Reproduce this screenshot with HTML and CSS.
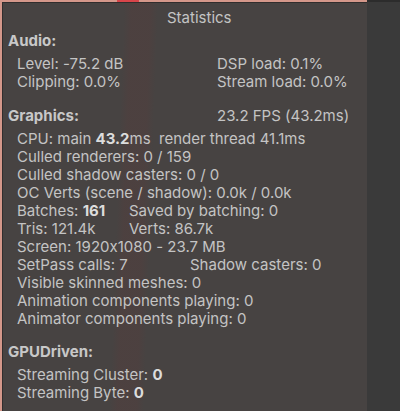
FILE: index.html
```html
<!DOCTYPE html>
<html lang="en">
<head>
<meta charset="utf-8">
<title>Statistics</title>
<link rel="stylesheet" href="styles.css">
</head>
<body>
<div class="app">
  <div class="viewport">
    <span class="scene-mark"></span>
    <div class="stats">
      <div class="title">Statistics</div>

      <section class="group">
        <div class="heading">Audio:</div>
        <div class="rows">
          <div class="row"><span class="cell w-200">Level: -75.2 dB</span><span>DSP load: 0.1%</span></div>
          <div class="row"><span class="cell w-200">Clipping: 0.0%</span><span>Stream load: 0.0%</span></div>
        </div>
      </section>

      <section class="group">
        <div class="heading-row"><span class="heading w-209">Graphics:</span><span class="fps">23.2 FPS (43.2ms)</span></div>
        <div class="rows">
          <div class="row">CPU: main&nbsp;<b>43.2</b>ms&nbsp; render thread 41.1ms</div>
          <div class="row">Culled renderers: 0 / 159</div>
          <div class="row">Culled shadow casters: 0 / 0</div>
          <div class="row">OC Verts (scene / shadow): 0.0k / 0.0k</div>
          <div class="row"><span class="cell w-112">Batches: <b>161</b></span><span>Saved by batching: 0</span></div>
          <div class="row"><span class="cell w-112">Tris: 121.4k</span><span>Verts: 86.7k</span></div>
          <div class="row">Screen: 1920x1080 - 23.7 MB</div>
          <div class="row"><span class="cell w-173">SetPass calls: 7</span><span>Shadow casters: 0</span></div>
          <div class="row">Visible skinned meshes: 0</div>
          <div class="row">Animation components playing: 0</div>
          <div class="row">Animator components playing: 0</div>
        </div>
      </section>

      <section class="group group-last">
        <div class="heading">GPUDriven:</div>
        <div class="rows">
          <div class="row">Streaming Cluster: <b>0</b></div>
          <div class="row">Streaming Byte: <b>0</b></div>
        </div>
      </section>
    </div>
  </div>
  <div class="sidebar"></div>
</div>
</body>
</html>
```
FILE: styles.css
```css
html, body {
  margin: 0;
  height: 100%;
}

body {
  background: #3a3a3a;
  font-family: Inter, "Noto Sans", sans-serif;
  font-size: 15px;
  font-feature-settings: "calt" 0;
  color: #c4c4c4;
  overflow: hidden;
}

.app {
  display: flex;
  height: 411px;
}

/* scene view behind the overlay */
.viewport {
  position: relative;
  width: 367px;
  flex: none;
  background: #d4978a;
  padding: 2px 0 0 2px;
  box-sizing: border-box;
}

.scene-mark {
  position: absolute;
  left: 117px;
  top: 0;
  width: 22px;
  height: 2px;
  background: #d8454a;
}

.sidebar {
  flex: 1;
  background: #3a3a3a;
  border-top: 2px solid #2c2c2c;
}

.stats {
  height: 100%;
  box-sizing: border-box;
  background-color: #474342;
  background-image: linear-gradient(92deg, transparent 32%, rgba(110, 50, 50, 0.14) 34%, rgba(110, 50, 50, 0.14) 39%, transparent 41%);
  border-top: 1px solid #302d2d;
  border-left: 1px solid #302d2d;
  padding: 6px 0 0 5px;
  line-height: 18px;
}

.title {
  padding-left: 159px;
  margin-bottom: 5px;
}

.group + .group {
  margin-top: 16px;
}

.group-last.group {
  margin-top: 15px;
}

.heading {
  font-weight: 700;
  color: #c8c8c8;
}

.heading-row {
  display: flex;
}

.rows {
  margin-top: 5px;
  padding-left: 9px;
}

.row {
  display: flex;
  white-space: pre;
}

.row b {
  font-weight: 700;
  color: #dcdcdc;
}

.cell {
  flex: none;
}

.w-200 { width: 200px; }
.w-209 { width: 209px; flex: none; }
.w-112 { width: 112px; }
.w-173 { width: 173px; }
```
